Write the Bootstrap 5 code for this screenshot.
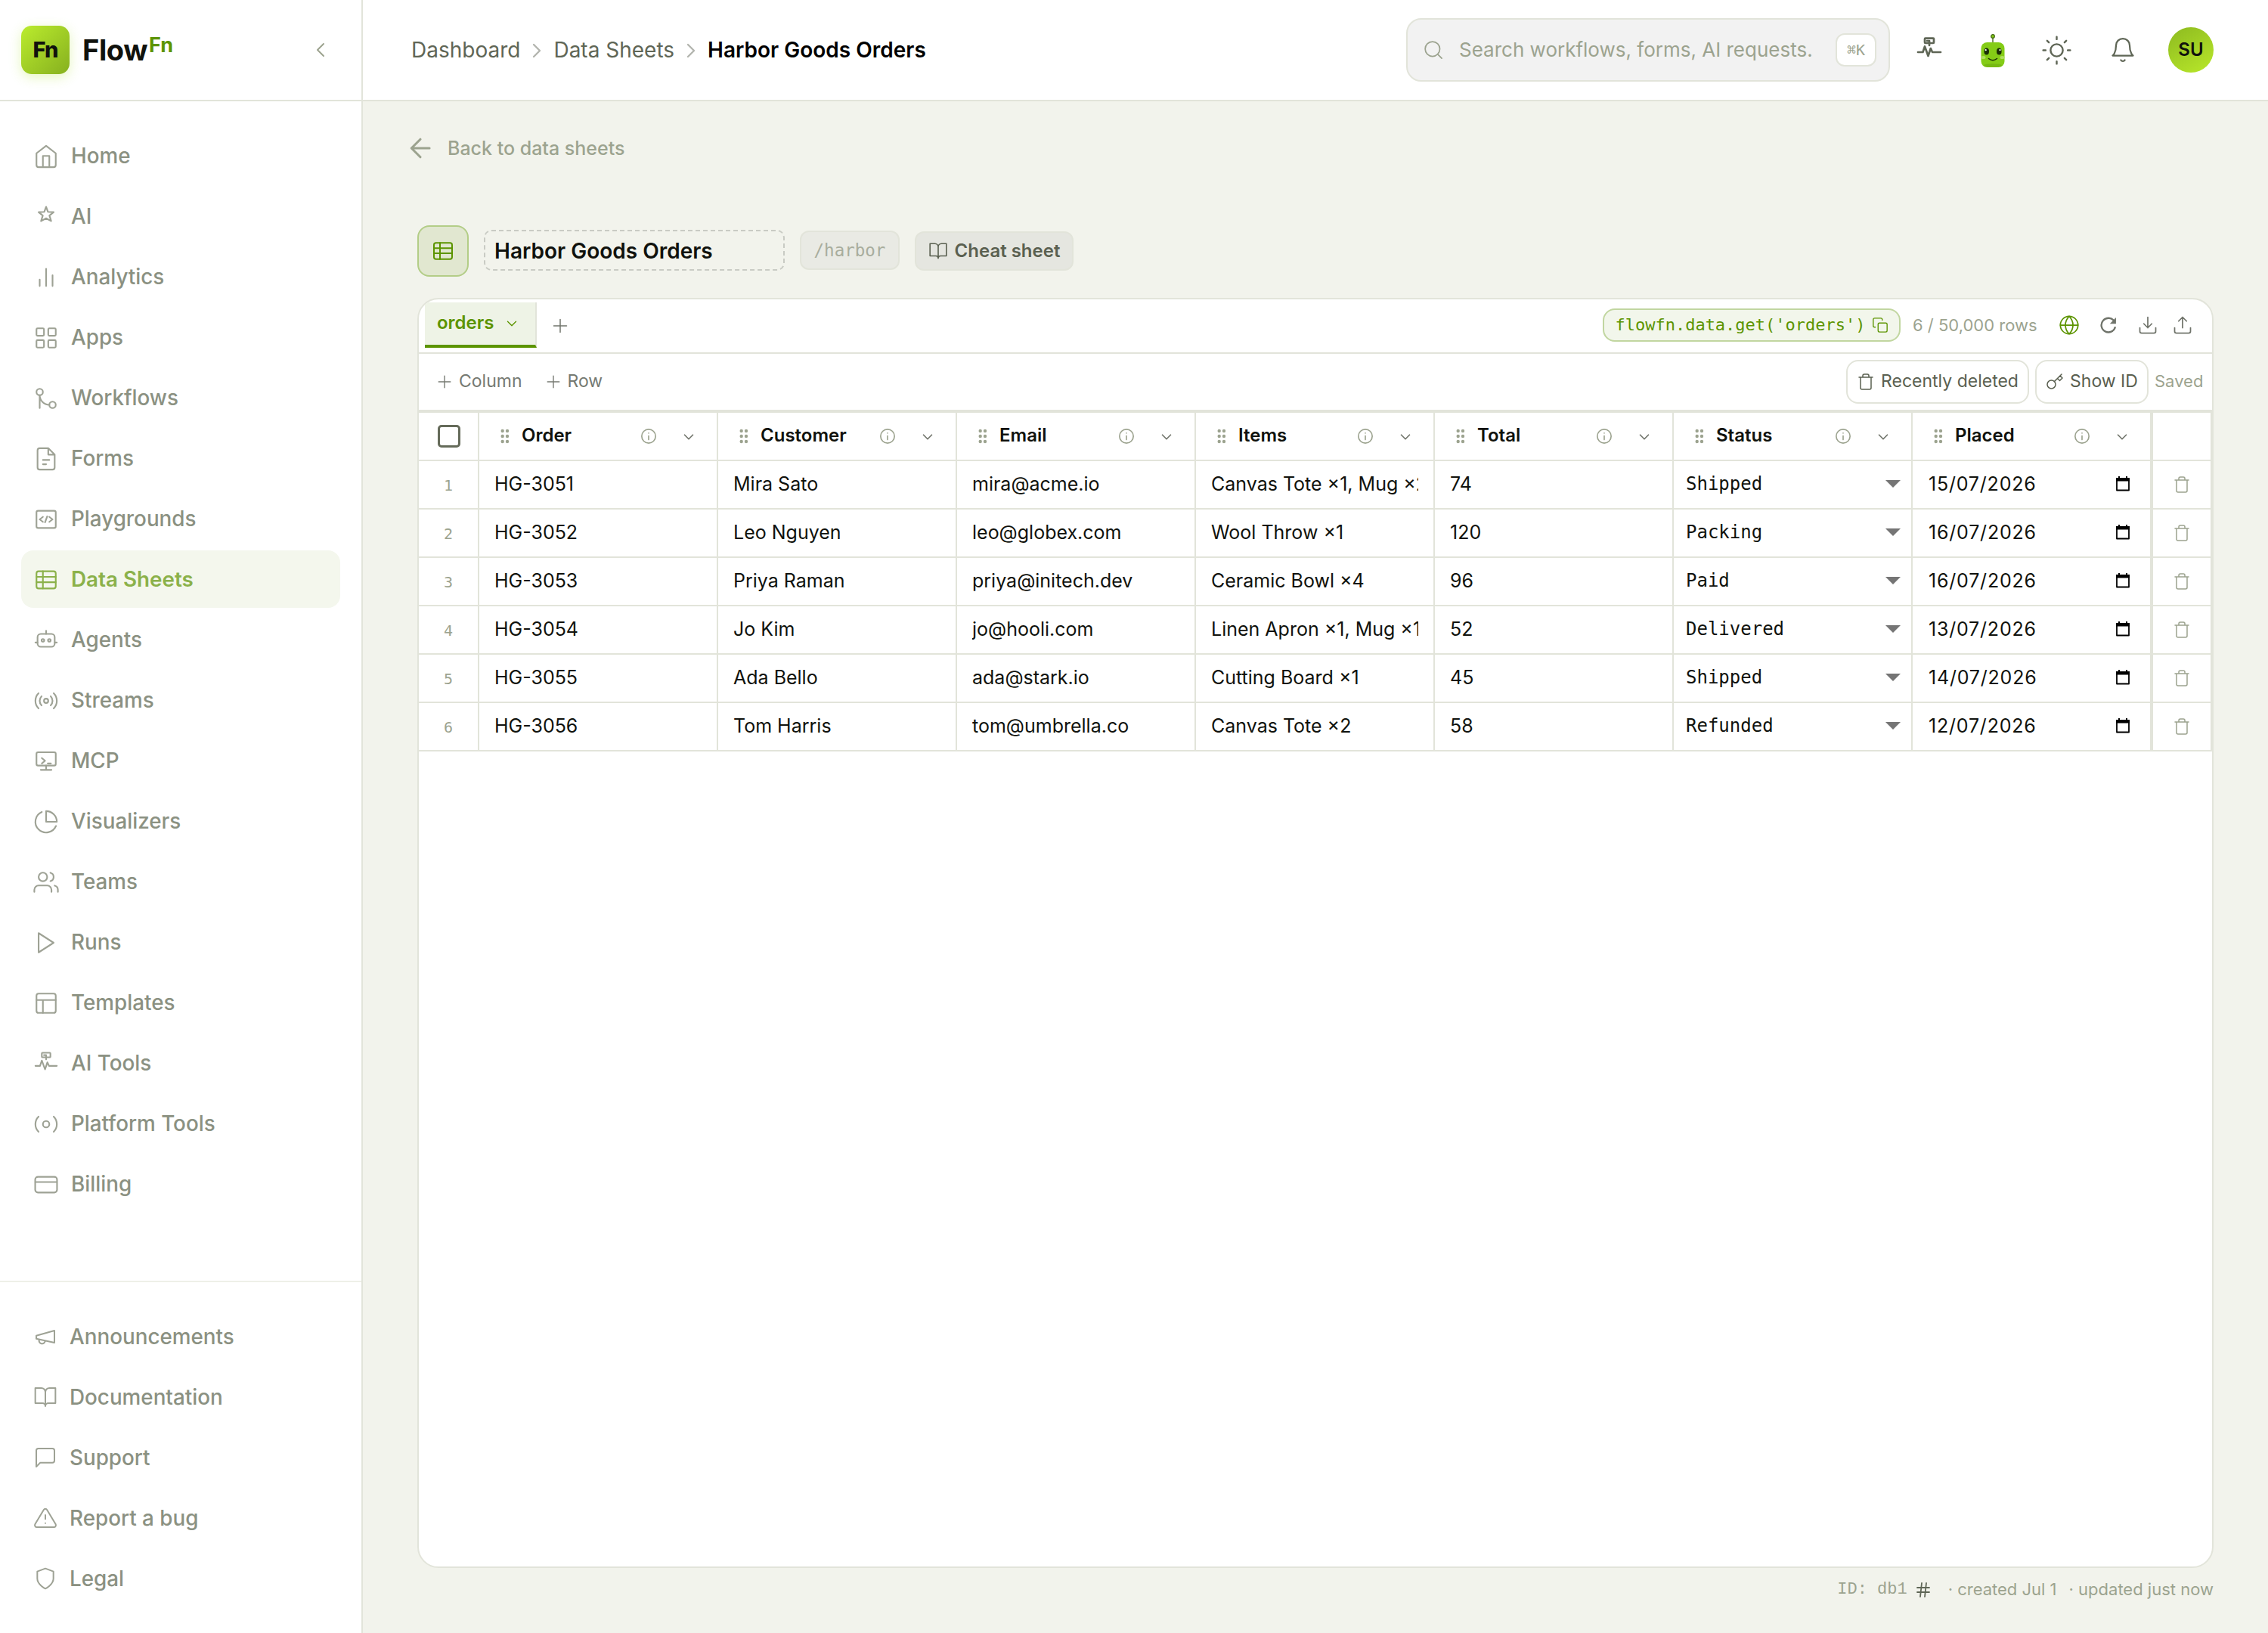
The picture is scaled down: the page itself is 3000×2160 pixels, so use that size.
<!DOCTYPE html>
<html lang="en">

<head>
	<meta charset="UTF-8">
	<meta name="viewport" content="width=device-width, initial-scale=1.0">
	<title>Harbor Goods Orders - FlowFn</title>
	<link href="https://cdn.jsdelivr.net/npm/bootstrap@5.3.0/dist/css/bootstrap.min.css" rel="stylesheet">
	<style>
		:root {
			--line: #e2e4da;
			--green: #5c9400;
			--ink: #10120d;
			--soft: #9ca38f;
			--dim: #5a6050;
			--mono: "DejaVu Sans Mono", "Liberation Mono", monospace;
		}

		body {
			width: 3000px;
			height: 2160px;
			overflow: hidden;
			background: #f2f3ec;
			color: var(--ink);
			font-family: Inter, "Liberation Sans", sans-serif;
			font-size: 24px;
			line-height: 1.2;
		}

		.ico {
			width: 24px;
			height: 24px;
			flex: none;
			fill: none;
			stroke: currentColor;
			stroke-width: 1.5;
			stroke-linecap: round;
			stroke-linejoin: round;
		}

		.ico.bold { stroke-width: 1.8; }
		.s22 { width: 22px; height: 22px; }
		.s26 { width: 26px; height: 26px; }
		.s28 { width: 28px; height: 28px; }
		.s32 { width: 32px; height: 32px; }

		/* Sidebar */
		.sidebar {
			width: 480px;
			border-right: 2px solid var(--line);
		}

		.brand {
			height: 134px;
			padding: 0 38px 0 28px;
			border-bottom: 2px solid var(--line);
		}

		.brand-tile {
			width: 64px;
			height: 64px;
			border-radius: 14px;
			background: linear-gradient(135deg, #bbec2d, #86b01f);
			box-shadow: 0 4px 16px rgba(170, 225, 40, .3);
			font-size: 29px;
			font-weight: 800;
			letter-spacing: -1px;
		}

		.brand-name {
			margin-left: 17px;
			font-size: 38px;
			font-weight: 700;
			letter-spacing: -.4px;
			line-height: 46px;
		}

		.brand-name span {
			margin-left: 2px;
			padding-top: 2px;
			color: var(--green);
			font-size: 27px;
			letter-spacing: -.2px;
			line-height: 30px;
		}

		.side-nav {
			gap: 4px;
			padding: 34px 28px;
		}

		.side-nav.lower {
			border-top: 2px solid #eef0e8;
		}

		.side-link {
			height: 76px;
			padding: 2px 16px 0;
			gap: 16px;
			border-radius: 16px;
			color: #8b9182;
			font-size: 27.8px;
			font-weight: 500;
		}

		.side-link .ico {
			width: 34px;
			height: 34px;
			color: #9ea295;
		}

		.lower .side-link .ico {
			width: 32px;
			height: 32px;
			margin-top: -2px;
		}

		.side-link.current,
		.side-link.current .ico {
			color: #8bb14a;
		}

		.side-link.current {
			background: #f4f7ed;
			font-weight: 600;
		}

		/* Top bar */
		.topbar {
			height: 134px;
			padding: 0 72px 0 64px;
			border-bottom: 2px solid var(--line);
		}

		.crumbs {
			padding-top: 1px;
			font-size: 28px;
			color: #5f6656;
		}

		.crumbs .ico {
			width: 32px;
			height: 32px;
			margin: 0 6px;
			color: #b3b5af;
			stroke-width: 1.8;
		}

		.search-box {
			width: 640px;
			height: 84px;
			margin-right: 10px;
			padding: 0 16px 0 20px;
			border: 2px solid var(--line);
			border-radius: 20px;
			background: #f2f2f2;
			color: var(--soft);
			font-size: 26px;
		}

		.search-box .ico {
			width: 28px;
			height: 28px;
			margin-right: 20px;
		}

		.keys {
			width: 54px;
			height: 44px;
			border: 2px solid var(--line);
			border-radius: 12px;
			font-family: var(--mono);
			font-size: 20px;
		}

		.top-btn {
			width: 84px;
			color: #5f6656;
		}

		.top-btn .ico {
			width: 36px;
			height: 36px;
		}

		.top-btn .sun-ico {
			width: 39px;
			height: 39px;
		}

		.avatar {
			width: 60px;
			height: 60px;
			margin-left: 18px;
			border-radius: 50%;
			background: linear-gradient(150deg, #8dba20, #b9e82a);
			font-size: 24px;
			font-weight: 600;
		}

		/* Sheet heading */
		.back-link {
			height: 124px;
			padding: 0 0 1px 59px;
			gap: 19px;
			color: var(--soft);
			font-size: 25px;
			font-weight: 500;
		}

		.back-link .ico {
			width: 34px;
			height: 34px;
			stroke-width: 2.2;
		}

		.heading {
			height: 68px;
			gap: 20px;
			margin: 40px 72px 28px;
		}

		.sheet-tile {
			width: 68px;
			height: 68px;
			border: 2px solid #b3cd87;
			border-radius: 16px;
			background: #e1e7d0;
			color: var(--green);
		}

		.sheet-title {
			width: 398px;
			height: 54px;
			margin-top: -2px;
			padding: 3px 12px 0;
			border: 2px dashed #c9cbc4;
			border-radius: 10px;
			font-size: 28px;
			font-weight: 600;
		}

		.slug {
			width: 132px;
			height: 52px;
			margin-top: -2px;
			border: 2px solid var(--line);
			border-radius: 12px;
			background: #e9eae4;
			color: #a8ad9d;
			font-family: var(--mono);
			font-size: 22.5px;
		}

		.cheat {
			width: 210px;
			height: 52px;
			gap: 9px;
			border: 2px solid var(--line);
			border-radius: 12px;
			background: #e5e6e0;
			color: var(--dim);
			font-weight: 600;
		}

		/* Sheet panel */
		.panel {
			width: 2376px;
			height: 1680px;
			margin-left: 72px;
			border: 2px solid var(--line);
			border-radius: 28px;
			overflow: hidden;
		}

		.tabs-bar {
			height: 72px;
			padding: 4px 25px 6px 8px;
			border-bottom: 2px solid var(--line);
			color: #70746b;
		}

		.sheet-tab {
			width: 148px;
			height: 60px;
			padding: 0 0 1px 16px;
			gap: 12px;
			border-right: 2px solid var(--line);
			border-bottom: 4px solid var(--green);
			background: #eef3e6;
			color: var(--green);
			font-weight: 600;
		}

		.tab-add {
			margin: 1px 0 0 19px;
		}

		.code-chip {
			width: 394px;
			height: 44px;
			border: 2px solid #c1d6a0;
			border-radius: 16px;
			background: #f2f6eb;
			color: var(--green);
			font-family: var(--mono);
			font-size: 22px;
		}

		.row-count {
			width: 165px;
			margin: 0 28px 0 16px;
			color: var(--soft);
			font-size: 22px;
			white-space: nowrap;
		}

		.sheet-actions {
			gap: 24px;
		}

		.sheet-actions .ico:last-child {
			margin-left: -6px;
		}

		.tool-bar {
			height: 76px;
			padding: 0 12px 0 23px;
			border-bottom: 2px solid var(--line);
			color: #767a72;
			font-size: 23px;
		}

		.row-add {
			margin-left: 30px;
		}

		.tool-btn {
			height: 58px;
			gap: 8px;
			border: 2px solid var(--line);
			border-radius: 16px;
			color: var(--dim);
		}

		.btn-deleted { width: 242px; }
		.btn-id { width: 150px; }

		.saved-note {
			width: 64px;
			margin-left: 8px;
			padding-bottom: 1px;
			color: var(--soft);
			font-size: 22px;
		}

		.sheet-grid {
			display: grid;
			grid-template-columns: 80px repeat(7, 316px) 80px;
			border-top: 2px solid var(--line);
		}

		.cell {
			height: 64px;
			border-right: 2px solid var(--line);
			border-bottom: 2px solid var(--line);
			padding: 0 20px 3px 20px;
			overflow: hidden;
			white-space: nowrap;
			font-size: 25px;
		}

		.cell.col-head {
			padding: 0 26px 1px 25px;
			font-size: 24px;
			font-weight: 600;
		}

		.grip-wrap { margin: 0 16px 0 3px; color: var(--soft); }
		.info-wrap { color: var(--soft); }
		.more-wrap { margin: 2px 0 0 31px; color: #70746b; }

		.cell.edge {
			padding: 0;
			justify-content: center;
			color: var(--soft);
		}

		.cell.num {
			padding-top: 1px;
			font-family: var(--mono);
			font-size: 20px;
		}

		.cell.trash {
			border-left: 2px solid var(--line);
		}

		.cell.status {
			padding: 0 14px 2px 16px;
			font-family: var(--mono);
			font-size: 24px;
		}

		.cell.date {
			padding: 0 26px 2px 21px;
			letter-spacing: .8px;
		}

		.check {
			width: 30px;
			height: 30px;
			margin: -1px 0 0 2px;
			border: 3px solid #656b5a;
			border-radius: 5px;
			background: #fff;
		}

		.meta {
			height: 57px;
			padding: 0 72px 0 0;
			color: var(--soft);
			font-size: 22px;
		}

		.meta .mono-id {
			padding-top: 2px;
			font-family: "Liberation Mono", monospace;
		}

		.hash-ico {
			margin: 0 21px 0 9px;
			color: #5f6656;
		}

		.created {
			margin-right: 16px;
		}
	</style>
</head>

<body class="d-flex">
	<!-- Icon sprite -->
	<svg class="d-none">
		<symbol id="home" viewBox="0 0 24 24"><path d="M3 9l9-7 9 7v11a2 2 0 0 1-2 2H5a2 2 0 0 1-2-2zM9 22V11.5h6V22" /></symbol>
		<symbol id="star" viewBox="0 0 24 24"><path d="M12 2.5l1.7 4.7 5.3.3-3.9 3.2 1.6 5.1L12 13.2l-4.7 2.6 1.6-5.1L5 7.5l5.3-.3z" /></symbol>
		<symbol id="bars" viewBox="0 0 24 24"><path d="M18 20V10M12 20V4M6 20v-6" /></symbol>
		<symbol id="apps" viewBox="0 0 24 24"><rect x="3" y="3" width="7" height="7" rx="1" /><rect x="14" y="3" width="7" height="7" rx="1" /><rect x="3" y="14" width="7" height="7" rx="1" /><rect x="14" y="14" width="7" height="7" rx="1" /></symbol>
		<symbol id="branch" viewBox="0 0 24 24"><circle cx="6" cy="6" r="3" /><circle cx="18" cy="18" r="3" /><path d="M6 9v12M6 9a9 9 0 0 0 9 9" /></symbol>
		<symbol id="file" viewBox="0 0 24 24"><path d="M14 2H6a2 2 0 0 0-2 2v16a2 2 0 0 0 2 2h12a2 2 0 0 0 2-2V8zM14 2v6h6M9 13h6M9 17h3" /></symbol>
		<symbol id="code" viewBox="0 0 24 24"><rect x="3" y="4" width="18" height="16" rx="1.5" /><path d="M9 9.7L6 12l3 2.3M15 9.7l3 2.3-3 2.3M13 9.2l-2 5.6" /></symbol>
		<symbol id="sheet" viewBox="0 0 24 24"><rect x="3" y="4" width="18" height="16" rx="2" /><path d="M3 9.2h18M3 14.2h18M9 4v16" /></symbol>
		<symbol id="bot" viewBox="0 0 24 24"><rect x="4" y="6" width="16" height="12" rx="3" /><path d="M12 3v3M4 14H2M22 14h-2" /><circle cx="9" cy="12" r="1.25" /><circle cx="15" cy="12" r="1.25" /></symbol>
		<symbol id="radio" viewBox="0 0 24 24"><circle cx="12" cy="12" r="2" /><path d="M16.24 7.76a6 6 0 0 1 0 8.49M7.76 16.24a6 6 0 0 1 0-8.49M19.07 4.93a10 10 0 0 1 0 14.14M4.93 19.07a10 10 0 0 1 0-14.14" /></symbol>
		<symbol id="mcp" viewBox="0 0 24 24"><rect x="3" y="3.5" width="18" height="12.5" rx="1.5" /><path d="M12 16v4M7 20h10M8 9l3 2.5L8 14M13.5 14h3" /></symbol>
		<symbol id="pie" viewBox="0 0 24 24"><path d="M21.21 15.89A10 10 0 1 1 8 2.83M22 12A10 10 0 0 0 12 2v10z" /></symbol>
		<symbol id="users" viewBox="0 0 24 24"><path d="M17 21v-2a4 4 0 0 0-4-4H5a4 4 0 0 0-4 4v2M23 21v-2a4 4 0 0 0-3-3.87M16 3.13a4 4 0 0 1 0 7.75" /><circle cx="9" cy="7" r="4" /></symbol>
		<symbol id="play" viewBox="0 0 24 24"><path d="M5 3l14 9-14 9z" /></symbol>
		<symbol id="layout" viewBox="0 0 24 24"><rect x="3" y="3" width="18" height="18" rx="2" /><path d="M3 9h18M9 9v12" /></symbol>
		<symbol id="pulse" viewBox="0 0 24 24"><rect x="8" y="1.8" width="8" height="4.2" rx=".6" /><path d="M10 4h2v4M2 14h4.3L8 9l3 8.3 2.2-6.6 1.5 3.3H22" /></symbol>
		<symbol id="platform" viewBox="0 0 24 24"><circle cx="12" cy="12" r="3" /><path d="M19.07 4.93a10 10 0 0 1 0 14.14M4.93 19.07a10 10 0 0 1 0-14.14" /></symbol>
		<symbol id="card" viewBox="0 0 24 24"><rect x="1.8" y="4.7" width="20.4" height="14.6" rx="2.5" /><path d="M2 9.5h20" /></symbol>
		<symbol id="horn" viewBox="0 0 24 24"><path d="M3 11l18-5v12L3 14zM11.6 16.8a3 3 0 1 1-5.8-1.6" /></symbol>
		<symbol id="book" viewBox="0 0 24 24"><path d="M2 3h6a4 4 0 0 1 4 4v14a3 3 0 0 0-3-3H2zM22 3h-6a4 4 0 0 0-4 4v14a3 3 0 0 1 3-3h7z" /></symbol>
		<symbol id="chat" viewBox="0 0 24 24"><path d="M21 15a2 2 0 0 1-2 2H7l-4 4V5a2 2 0 0 1 2-2h14a2 2 0 0 1 2 2z" /></symbol>
		<symbol id="warn" viewBox="0 0 24 24"><path d="M10.29 3.86L1.82 18a2 2 0 0 0 1.71 3h16.94a2 2 0 0 0 1.71-3L13.71 3.86a2 2 0 0 0-3.42 0zM12 9v4M12 17h.01" /></symbol>
		<symbol id="shield" viewBox="0 0 24 24"><path d="M12 22s8-4 8-10V5l-8-3-8 3v7c0 6 8 10 8 10z" /></symbol>
		<symbol id="left" viewBox="0 0 24 24"><path d="M15 18l-6-6 6-6" /></symbol>
		<symbol id="right" viewBox="0 0 24 24"><path d="M9 18l6-6-6-6" /></symbol>
		<symbol id="down" viewBox="0 0 24 24"><path d="M6 9l6 6 6-6" /></symbol>
		<symbol id="arrow" viewBox="0 0 24 24"><path d="M20.5 12H4M12 3.7L3.7 12l8.3 8.3" /></symbol>
		<symbol id="search" viewBox="0 0 24 24"><circle cx="11" cy="11" r="8.3" /><path d="M21.5 21.5l-4.5-4.5" /></symbol>
		<symbol id="sun" viewBox="0 0 24 24"><circle cx="12" cy="12" r="5" /><path d="M12 1v2M12 21v2M4.22 4.22l1.42 1.42M18.36 18.36l1.42 1.42M1 12h2M21 12h2M4.22 19.78l1.42-1.42M18.36 5.64l1.42-1.42" /></symbol>
		<symbol id="bell" viewBox="0 0 24 24"><path d="M18 8A6 6 0 0 0 6 8c0 7-3 9-3 9h18s-3-2-3-9M13.73 21a2 2 0 0 1-3.46 0" /></symbol>
		<symbol id="plus" viewBox="0 0 24 24"><path d="M12 3.5v17M3.5 12h17" /></symbol>
		<symbol id="copy" viewBox="0 0 24 24"><rect x="9" y="9" width="13" height="13" rx="2" /><path d="M5 15H4a2 2 0 0 1-2-2V4a2 2 0 0 1 2-2h9a2 2 0 0 1 2 2v1" /></symbol>
		<symbol id="globe" viewBox="0 0 24 24"><circle cx="12" cy="12" r="10" /><path d="M2 12h20M12 2c3 3 4.3 6.5 4.3 10S15 19 12 22c-3-3-4.3-6.5-4.3-10S9 5 12 2z" /></symbol>
		<symbol id="reload" viewBox="0 0 24 24"><path d="M18.5 7.5A8 8 0 1 0 19.7 14" stroke-width="2" stroke-linecap="butt" /><path d="M20.5 3.5v7h-7z" fill="currentColor" stroke="none" /></symbol>
		<symbol id="get" viewBox="0 0 24 24"><path d="M21 15v4a2 2 0 0 1-2 2H5a2 2 0 0 1-2-2v-4M7.5 10.5L12 15l4.5-4.5M12 15V3" /></symbol>
		<symbol id="put" viewBox="0 0 24 24"><path d="M21 15v4a2 2 0 0 1-2 2H5a2 2 0 0 1-2-2v-4M7.5 7.5L12 3l4.5 4.5M12 3v12" /></symbol>
		<symbol id="bin" viewBox="0 0 24 24"><path d="M3 6h18M19 6v14a2 2 0 0 1-2 2H7a2 2 0 0 1-2-2V6M8 6V4a2 2 0 0 1 2-2h4a2 2 0 0 1 2 2v2" /></symbol>
		<symbol id="key" viewBox="0 0 24 24"><path d="M21 2l-2 2M11.39 11.61a5.5 5.5 0 1 1-7.78 7.78 5.5 5.5 0 0 1 7.78-7.78zM11.39 11.61L15.5 7.5M15.5 7.5l3 3L22 7l-3-3M15.5 7.5L19 4" /></symbol>
		<symbol id="info" viewBox="0 0 24 24"><circle cx="12" cy="12" r="10" /><path d="M12 11.5V17M12 7.5h.01" /></symbol>
		<symbol id="hash" viewBox="0 0 24 24"><path d="M4 9h16M4 15h16M10 3L8 21M16 3l-2 18" /></symbol>
		<symbol id="grip" viewBox="0 0 12 20"><g fill="currentColor" stroke="none"><circle cx="2.7" cy="3" r="2.2" /><circle cx="9" cy="3" r="2.2" /><circle cx="2.7" cy="10" r="2.2" /><circle cx="9" cy="10" r="2.2" /><circle cx="2.7" cy="17" r="2.2" /><circle cx="9" cy="17" r="2.2" /></g></symbol>
		<symbol id="calendar" viewBox="0 0 20 22"><path d="M2 4h16v15.5H2z" stroke="#000" stroke-width="1.8" /><path d="M1 3h18v4.5H1zM4 1h2v3H4zM14 1h2v3h-2z" fill="#000" stroke="none" /></symbol>
		<symbol id="caret" viewBox="0 0 20 10"><path d="M0 0h20L10 10z" fill="#757575" stroke="none" /></symbol>
	</svg>

	<!-- Sidebar -->
	<aside class="sidebar bg-white d-flex flex-column flex-shrink-0">
		<div class="brand d-flex align-items-center">
			<div class="brand-tile d-flex align-items-center justify-content-center">Fn</div>
			<div class="brand-name d-flex align-items-start">Flow<span>Fn</span></div>
			<svg class="ico s32 ms-auto" color="#9ca38f"><use href="#left" /></svg>
		</div>
		<nav class="side-nav d-flex flex-column" id="mainNav"></nav>
		<nav class="side-nav lower d-flex flex-column mt-auto" id="lowerNav"></nav>
	</aside>

	<div class="flex-grow-1 d-flex flex-column">
		<!-- Top bar -->
		<header class="topbar bg-white d-flex align-items-center">
			<div class="crumbs d-flex align-items-center">
				<span>Dashboard</span>
				<svg class="ico"><use href="#right" /></svg>
				<span>Data Sheets</span>
				<svg class="ico"><use href="#right" /></svg>
				<span class="fw-semibold text-black">Harbor Goods Orders</span>
			</div>
			<div class="search-box d-flex align-items-center ms-auto">
				<svg class="ico"><use href="#search" /></svg>
				<span>Search workflows, forms, AI requests.</span>
				<span class="keys bg-white d-flex align-items-center justify-content-center ms-auto">⌘K</span>
			</div>
			<div class="top-btn d-flex justify-content-center"><svg class="ico bold"><use href="#pulse" /></svg></div>
			<div class="top-btn d-flex justify-content-center">
				<svg width="36" height="48" viewBox="0 0 36 48">
					<path d="M18 8v7" stroke="#5f7a3a" stroke-width="1.6" />
					<circle cx="18" cy="6" r="2.3" fill="#84cc16" stroke="#3f6212" stroke-width="1.2" />
					<rect x="2.5" y="14" width="31" height="33" rx="8" fill="#84cc16" />
					<ellipse cx="18" cy="44.5" rx="12" ry="2.3" fill="#76b813" />
					<ellipse cx="9.7" cy="26" rx="3.3" ry="4.5" fill="#1a2e05" />
					<ellipse cx="26.3" cy="26" rx="3.3" ry="4.5" fill="#1a2e05" />
					<circle cx="8.7" cy="24.2" r="1.1" fill="#fff" />
					<circle cx="27.5" cy="24.2" r="1.1" fill="#fff" />
					<ellipse cx="5.5" cy="34" rx="3" ry="2" fill="#b0e05e" />
					<ellipse cx="30.5" cy="34" rx="3" ry="2" fill="#b0e05e" />
					<path d="M12.5 35.5q5.500 4.500 11 0" fill="none" stroke="#1a2e05" stroke-width="1.6" stroke-linecap="round" />
				</svg>
			</div>
			<div class="top-btn d-flex justify-content-center"><svg class="ico sun-ico"><use href="#sun" /></svg></div>
			<div class="top-btn d-flex justify-content-center ms-1"><svg class="ico"><use href="#bell" /></svg></div>
			<div class="avatar d-flex align-items-center justify-content-center">SU</div>
		</header>

		<!-- Sheet heading -->
		<div class="back-link d-flex align-items-center">
			<svg class="ico"><use href="#arrow" /></svg>
			<span>Back to data sheets</span>
		</div>
		<div class="heading d-flex align-items-center">
			<div class="sheet-tile d-flex align-items-center justify-content-center"><svg class="ico s32"><use href="#sheet" /></svg></div>
			<div class="sheet-title d-flex align-items-center">Harbor Goods Orders</div>
			<div class="slug d-flex align-items-center justify-content-center">/harbor</div>
			<div class="cheat d-flex align-items-center justify-content-center"><svg class="ico s26"><use href="#book" /></svg>Cheat sheet</div>
		</div>

		<!-- Sheet panel -->
		<main class="panel bg-white">
			<div class="tabs-bar d-flex align-items-center">
				<div class="sheet-tab d-flex align-items-center">orders <svg class="ico s22"><use href="#down" /></svg></div>
				<svg class="ico tab-add"><use href="#plus" /></svg>
				<div class="code-chip d-flex align-items-center justify-content-center gap-2 ms-auto">flowfn.data.get('orders')<svg class="ico s22"><use href="#copy" /></svg></div>
				<span class="row-count">6 / 50,000 rows</span>
				<div class="sheet-actions d-flex align-items-center">
					<svg class="ico s28" color="#5c9400"><use href="#globe" /></svg>
					<svg class="ico s28"><use href="#reload" /></svg>
					<svg class="ico s28"><use href="#get" /></svg>
					<svg class="ico s28"><use href="#put" /></svg>
				</div>
			</div>
			<div class="tool-bar d-flex align-items-center">
				<svg class="ico s22 me-2"><use href="#plus" /></svg>Column
				<svg class="ico s22 me-2 row-add"><use href="#plus" /></svg>Row
				<div class="tool-btn btn-deleted d-flex align-items-center justify-content-center ms-auto"><svg class="ico"><use href="#bin" /></svg>Recently deleted</div>
				<div class="tool-btn btn-id d-flex align-items-center justify-content-center ms-2"><svg class="ico"><use href="#key" /></svg>Show ID</div>
				<span class="saved-note">Saved</span>
			</div>
			<div class="sheet-grid" id="grid"></div>
		</main>
		<div class="meta d-flex align-items-center justify-content-end">
			<span class="mono-id">ID: db1</span>
			<svg class="ico bold hash-ico"><use href="#hash" /></svg>
			<span class="created">· created Jul 1</span>
			<span>· updated just now</span>
		</div>
	</div>

	<script src="https://cdn.jsdelivr.net/npm/bootstrap@5.3.0/dist/js/bootstrap.bundle.min.js"></script>
	<script>
		const mainLinks = [
			['home', 'Home'], ['star', 'AI'], ['bars', 'Analytics'], ['apps', 'Apps'], ['branch', 'Workflows'],
			['file', 'Forms'], ['code', 'Playgrounds'], ['sheet', 'Data Sheets'], ['bot', 'Agents'], ['radio', 'Streams'],
			['mcp', 'MCP'], ['pie', 'Visualizers'], ['users', 'Teams'], ['play', 'Runs'], ['layout', 'Templates'],
			['pulse', 'AI Tools'], ['platform', 'Platform Tools'], ['card', 'Billing']
		];
		const lowerLinks = [
			['horn', 'Announcements'], ['book', 'Documentation'], ['chat', 'Support'], ['warn', 'Report a bug'], ['shield', 'Legal']
		];
		const columns = ['Order', 'Customer', 'Email', 'Items', 'Total', 'Status', 'Placed'];
		const rows = [
			['HG-3051', 'Mira Sato', 'mira@acme.io', 'Canvas Tote ×1, Mug ×2', '74', 'Shipped', '15/07/2026'],
			['HG-3052', 'Leo Nguyen', 'leo@globex.com', 'Wool Throw ×1', '120', 'Packing', '16/07/2026'],
			['HG-3053', 'Priya Raman', 'priya@initech.dev', 'Ceramic Bowl ×4', '96', 'Paid', '16/07/2026'],
			['HG-3054', 'Jo Kim', 'jo@hooli.com', 'Linen Apron ×1, Mug ×1', '52', 'Delivered', '13/07/2026'],
			['HG-3055', 'Ada Bello', 'ada@stark.io', 'Cutting Board ×1', '45', 'Shipped', '14/07/2026'],
			['HG-3056', 'Tom Harris', 'tom@umbrella.co', 'Canvas Tote ×2', '58', 'Refunded', '12/07/2026']
		];

		function icon(name, w, h, cls) {
			return `<svg class="ico ${cls || ''}" style="width:${w}px;height:${h}px"><use href="#${name}"/></svg>`;
		}

		function navLink([name, label]) {
			const current = label === 'Data Sheets' ? ' current' : '';
			return `<a class="side-link d-flex align-items-center text-decoration-none${current}"><svg class="ico"><use href="#${name}"/></svg>${label}</a>`;
		}

		document.getElementById('mainNav').innerHTML = mainLinks.map(navLink).join('');
		document.getElementById('lowerNav').innerHTML = lowerLinks.map(navLink).join('');

		// Header row
		let html = '<div class="cell edge d-flex align-items-center"><span class="check"></span></div>';
		columns.forEach(name => {
			html += `<div class="cell col-head d-flex align-items-center"><span class="grip-wrap d-flex">${icon('grip', 12, 20)}</span>${name}
				<span class="info-wrap d-flex ms-auto">${icon('info', 22, 22, 'bold')}</span>
				<span class="more-wrap d-flex">${icon('down', 22, 22, 'bold')}</span></div>`;
		});
		html += '<div class="cell edge trash"></div>';

		// Data rows
		rows.forEach((row, i) => {
			html += `<div class="cell edge num d-flex align-items-center">${i + 1}</div>`;
			row.forEach((value, c) => {
				if (c === 5) {
					html += `<div class="cell status d-flex align-items-center">${value}${icon('caret', 20, 10, 'ms-auto')}</div>`;
				} else if (c === 6) {
					html += `<div class="cell date d-flex align-items-center">${value}${icon('calendar', 20, 22, 'ms-auto')}</div>`;
				} else {
					html += `<div class="cell d-flex align-items-center"><span class="overflow-hidden">${value}</span></div>`;
				}
			});
			html += `<div class="cell edge trash d-flex align-items-center">${icon('bin', 24, 24)}</div>`;
		});
		document.getElementById('grid').innerHTML = html;
	</script>
</body>

</html>
